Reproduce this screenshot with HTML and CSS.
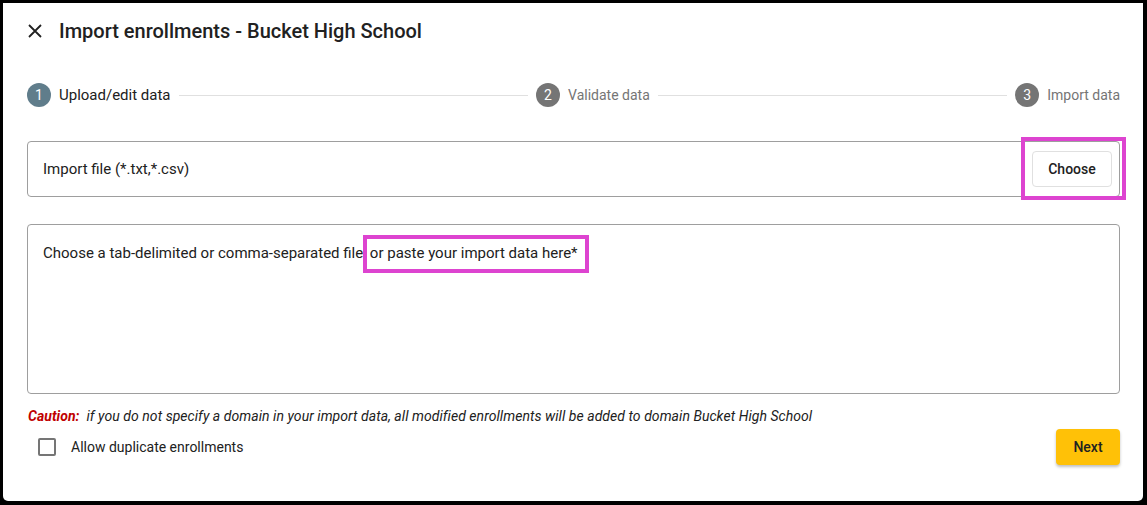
FILE: index.html
```html
<!DOCTYPE html>
<html lang="en">
<head>
    <meta charset="UTF-8">
    <meta name="viewport" content="width=device-width, initial-scale=1.0">
    <title>Import enrollments - Bucket High School</title>
    <link rel="stylesheet" href="styles.css">
</head>
<body>
    <div class="dialog">
        <header class="dialog-header">
            <button class="close-btn" aria-label="Close">
                <svg width="14" height="14" viewBox="0 0 14 14">
                    <path d="M1 1 L13 13 M13 1 L1 13" stroke="#212121" stroke-width="1.8" fill="none"/>
                </svg>
            </button>
            <h1>Import enrollments - Bucket High School</h1>
        </header>

        <!-- Stepper -->
        <div class="stepper">
            <div class="step active">
                <span class="step-num">1</span>
                <span class="step-label">Upload/edit data</span>
            </div>
            <div class="step-line"></div>
            <div class="step">
                <span class="step-num">2</span>
                <span class="step-label">Validate data</span>
            </div>
            <div class="step-line"></div>
            <div class="step">
                <span class="step-num">3</span>
                <span class="step-label">Import data</span>
            </div>
        </div>

        <div class="file-field">
            <span class="file-label">Import file (*.txt,*.csv)</span>
            <button class="btn choose-btn">Choose</button>
            <div class="highlight choose-highlight"></div>
        </div>

        <div class="data-area">
            <p>Choose a tab-delimited or comma-separated file,<span class="mark"> or paste your import data here*</span></p>
        </div>

        <p class="caution"><strong>Caution:</strong>&nbsp; if you do not specify a domain in your import data, all modified enrollments will be added to domain Bucket High School</p>

        <div class="dialog-footer">
            <label class="check">
                <span class="check-box"></span>
                Allow duplicate enrollments
            </label>
            <button class="btn next-btn">Next</button>
        </div>
    </div>
</body>
</html>
```

FILE: styles.css
```css
/* General Styles */
* {
    margin: 0;
    padding: 0;
    box-sizing: border-box;
}

body {
    font-family: Roboto, 'Liberation Sans', sans-serif;
    background: #000;
    color: #212121;
    height: 505px;
    overflow: hidden;
}

.dialog {
    margin: 3px 4px 0 3px;
    height: 498px;
    background: #fff;
    border-radius: 0 0 5px 5px;
    padding: 0 23px 0 24px;
    display: flex;
    flex-direction: column;
}

.dialog-header {
    height: 56px;
    display: flex;
    align-items: center;
    gap: 17px;
}

.close-btn {
    border: none;
    background: none;
    width: 14px;
    height: 14px;
    margin-left: 1px;
    display: flex;
}

.dialog-header h1 {
    font-size: 20px;
    font-weight: 500;
    color: #212121;
}

/* Stepper */
.stepper {
    margin-top: 24px;
    height: 24px;
    display: flex;
    align-items: center;
    gap: 8px;
}

.step {
    display: flex;
    align-items: center;
    gap: 8px;
}

.step-num {
    width: 24px;
    height: 24px;
    border-radius: 50%;
    background: #757575;
    color: #fff;
    font-size: 14px;
    display: flex;
    align-items: center;
    justify-content: center;
}

.step-label {
    font-size: 14px;
    color: #757575;
}

.step.active .step-num {
    background: #607d8b;
}

.step.active .step-label {
    font-size: 15px;
    color: #212121;
}

.step-line {
    flex: 1;
    height: 1px;
    background: #e0e0e0;
}

/* Fields */
.file-field {
    position: relative;
    margin-top: 34px;
    height: 56px;
    border: 1px solid #9e9e9e;
    border-radius: 4px;
    display: flex;
    align-items: center;
    justify-content: space-between;
    padding: 0 7px 0 15px;
}

.file-label {
    font-size: 15px;
}

.btn {
    font-family: inherit;
    font-size: 14px;
    font-weight: 500;
    color: #212121;
    border-radius: 4px;
    cursor: pointer;
}

.choose-btn {
    width: 80px;
    height: 36px;
    background: #fff;
    border: 1px solid #e0e0e0;
}

.highlight,
.mark::after {
    position: absolute;
    border: 4px solid #dd44d0;
    pointer-events: none;
}

.choose-highlight {
    top: -5px;
    right: -7px;
    bottom: -4px;
    width: 105px;
}

.data-area {
    margin-top: 27px;
    height: 170px;
    border: 1px solid #9e9e9e;
    border-radius: 4px;
    padding: 18px 15px;
    font-size: 15px;
    line-height: 20px;
}

.mark {
    position: relative;
}

.mark::after {
    content: "";
    top: -9px;
    bottom: -11px;
    left: -3px;
    right: -11px;
}

.caution {
    margin-top: 14px;
    margin-left: 1px;
    font-size: 14px;
    line-height: 17px;
    font-style: italic;
    letter-spacing: 0.05px;
    color: #212121;
}

.caution strong {
    color: #c00000;
    font-weight: 700;
}

.dialog-footer {
    margin-top: 4px;
    display: flex;
    align-items: center;
    justify-content: space-between;
}

.check {
    display: flex;
    align-items: center;
    gap: 15px;
    font-size: 14px;
    padding-left: 11px;
}

.check-box {
    width: 18px;
    height: 18px;
    border: 2px solid #757575;
    border-radius: 2px;
}

.next-btn {
    width: 64px;
    height: 36px;
    border: none;
    background: #ffc107;
    box-shadow: 0 2px 3px rgba(0, 0, 0, 0.25);
}
```
